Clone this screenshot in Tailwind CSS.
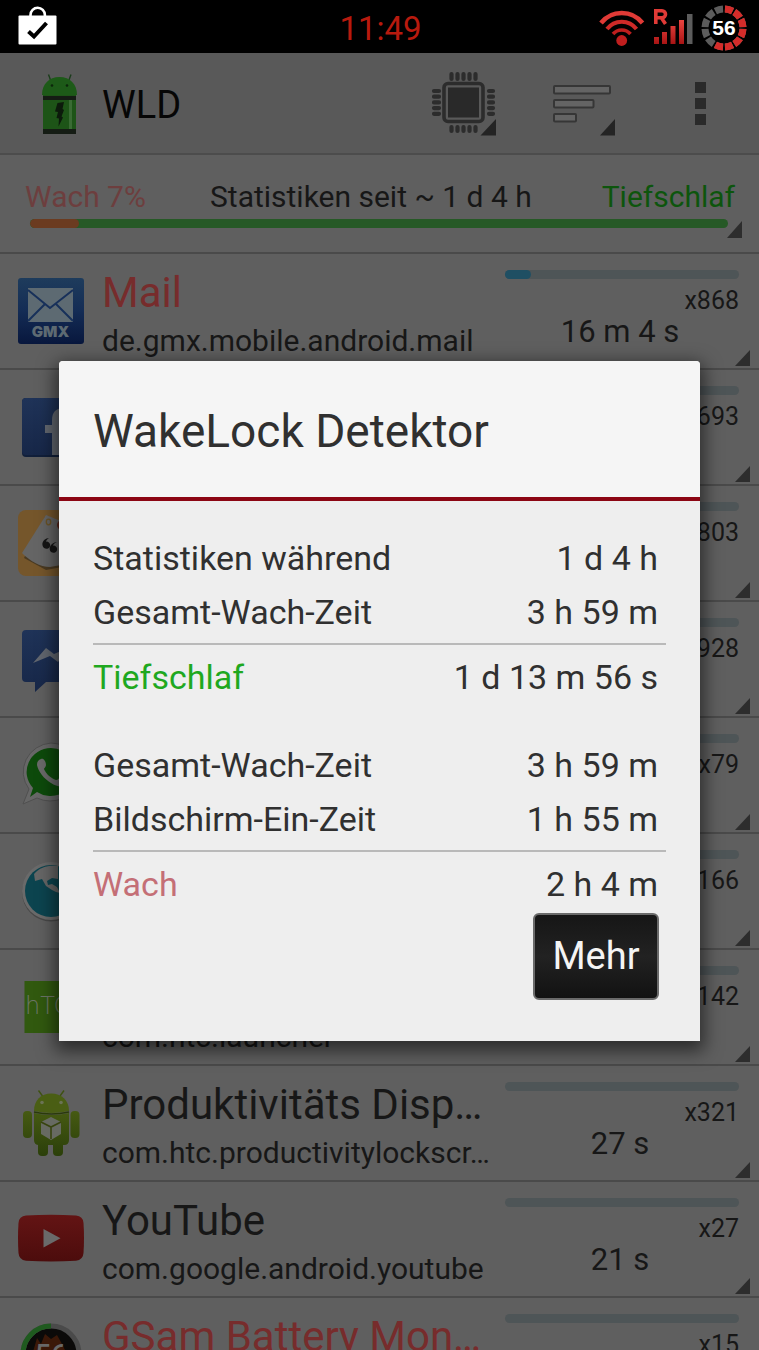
<!DOCTYPE html>
<html lang="de">
<head>
<meta charset="utf-8">
<meta name="viewport" content="width=device-width, initial-scale=1">
<title>WakeLock Detektor</title>
<script src="https://cdn.jsdelivr.net/npm/@tailwindcss/browser@4"></script>
</head>
<body class="h-screen overflow-hidden bg-[#5f5f5f] font-[Roboto,sans-serif] text-[#171717]">
<div class="relative flex h-full flex-col overflow-hidden">

<!-- Status bar -->
<div class="grid h-[53px] shrink-0 grid-cols-[1fr_auto_1fr] items-center bg-black pl-[18px] pr-3">
  <svg class="-mt-1 h-10 w-10" viewBox="18 4 40 40" aria-label="Play Store">
    <path d="M30.500 14v-1a7.200 7.200 0 0 1 14.400 0v1" fill="none" stroke="#fff" stroke-width="2.600"/>
    <rect x="18.500" y="13.500" width="38" height="29" rx="1" fill="#fff"/>
    <path d="M28.500 29.500l5.500 5 12.500-13.500" fill="none" stroke="#000" stroke-width="4"/>
  </svg>
  <time class="pr-1 pt-0.5 text-[33px] leading-[53px] text-[#b81a0e]">11:49</time>
  <div class="flex items-center justify-end gap-2">
    <svg class="h-[46px] w-[46px]" viewBox="598 4 46 46" aria-label="WLAN">
      <defs><linearGradient id="red" x1="0" y1="0" x2="0" y2="1"><stop offset="0" stop-color="#ea4540"/><stop offset="1" stop-color="#a81414"/></linearGradient></defs>
      <path fill="none" stroke="#e03a36" stroke-width="4.500" d="M600 22a26.500 26.500 0 0 1 41.500 0"/>
      <path fill="none" stroke="#cf2a28" stroke-width="4" d="M606 28a18.500 18.500 0 0 1 29.500 0"/>
      <path fill="none" stroke="#be1e1e" stroke-width="3.600" d="M612 33a11.500 11.500 0 0 1 17.500 0"/>
      <circle cx="620.700" cy="39.500" r="5.400" fill="#c01e1e"/>
    </svg>
    <svg class="h-[46px] w-10" viewBox="654 4 40 46" aria-label="Mobilfunk, Roaming">
      <path fill="none" stroke="#e03a36" stroke-width="3.600" d="M656.800 23V9.800h6.200a3.300 3.300 0 0 1 0 7h-5M662.500 17l4 6"/>
      <path fill="url(#red)" d="M655 36h5v7h-5zM663 31h5v12h-5zM671.500 25h5v18h-5zM680 19h5v24h-5z"/>
      <path fill="#5c5c5c" d="M688 13h5.500v30H688z"/>
    </svg>
    <svg class="h-[46px] w-[46px]" viewBox="701 4 46 46" aria-label="Akku 56 Prozent">
      <g fill="none" stroke-width="7" transform="rotate(-90 724 27)">
        <circle cx="724" cy="27" r="19" pathLength="120" stroke="#5c5c5c" stroke-dasharray="8 2" stroke-dashoffset="-1"/>
        <circle cx="724" cy="27" r="19" pathLength="120" stroke="#d42c2a" stroke-dasharray="8 2 8 2 8 2 8 2 8 2 8 2 8 52" stroke-dashoffset="-1"/>
      </g>
      <text x="724" y="34" text-anchor="middle" font-family="Liberation Sans, sans-serif" font-weight="700" font-size="21" fill="#fff">56</text>
    </svg>
  </div>
</div>

<!-- Action bar -->
<header class="flex h-[102px] shrink-0 items-center border-b-2 border-[#4c4c4c] bg-[#595959] pl-10">
  <svg class="h-[62px] w-[38px]" viewBox="40 72 38 62" aria-hidden="true">
    <path d="M50.500 80l-2-5.500M69 80l2-5.500" stroke="#1b3d1b" stroke-width="1.400"/>
    <path d="M42 95c0-11 7-18 17.500-18S77 84 77 95z" fill="#1d5a18"/>
    <circle cx="52" cy="85.500" r="1.300" fill="#0c260a"/><circle cx="67" cy="85.500" r="1.300" fill="#0c260a"/>
    <path d="M43 95h33v39H43z" fill="#1d5417"/>
    <path d="M43 96h33v4H43zM43 129h33v5H43z" fill="#151c14"/>
    <path d="M69 100h3v29h-3z" fill="#3a6b34"/>
    <path d="M57.500 103l6.500-1-1.500 7 1.500 1-2.500 6.500 1.500 1-4.500 9 .500-8-2.500-.500 1.500-6-3-.500z" fill="#0c1a0b"/>
  </svg>
  <h1 class="ml-6 flex-1 pt-1 text-[38px] leading-[48px] text-[#060606]">WLD</h1>
  <button type="button" class="mr-14" aria-label="Prozessor-Wakelocks">
    <svg class="h-[66px] w-[66px]" viewBox="432 70 66 66">
      <g stroke="#2c2c2c" stroke-width="4.200" stroke-linecap="round">
        <path d="M452.500 74v5M458.500 74v5M464.500 74v5M470.500 74v5M476.500 74v5M452.500 127v4M458.500 127v4M464.500 127v4M470.500 127v4M476.500 127v4"/>
        <path d="M435 91h5M435 96.700h5M435 102.400h5M435 108.100h5M435 113.800h5M490 91h4M490 96.700h4M490 102.400h4M490 108.100h4M490 113.800h4"/>
      </g>
      <rect x="445" y="83.500" width="39" height="38" rx="4" fill="none" stroke="#2c2c2c" stroke-width="3.600"/>
      <rect x="449" y="87.500" width="31" height="30" fill="#292929"/>
      <path d="M497 119v16.500h-15.500z" fill="#242424"/>
    </svg>
  </button>
  <button type="button" class="mr-[79px]" aria-label="Sortieren">
    <svg class="h-[66px] w-[62px]" viewBox="553 70 62 66">
      <g fill="#646464" stroke="#363636" stroke-width="2"><rect x="554" y="86" width="56" height="7.500" rx="1"/><rect x="554" y="100" width="39.500" height="7.500" rx="1"/><rect x="554" y="114" width="22" height="7.500" rx="1"/></g>
      <path d="M615 119v16.500h-15z" fill="#242424"/>
    </svg>
  </button>
  <button type="button" class="mr-[53px]" aria-label="Weitere Optionen">
    <svg class="h-[66px] w-3" viewBox="694 70 12 66"><path d="M695 82h11v11h-11zM695 98h11v11h-11zM695 114h11v11h-11z" fill="#2a2a2a"/></svg>
  </button>
</header>

<!-- Summary -->
<section class="relative flex h-[99px] shrink-0 flex-col border-b-2 border-[#4a4a4a] pt-6">
  <div class="flex pl-[25px] pr-6 text-[30px] leading-9">
    <span class="w-[185px] text-[#6d3e3e]">Wach 7%</span>
    <span>Statistiken seit ~ 1 d 4 h</span>
    <span class="ml-auto text-[#0d550d]">Tiefschlaf</span>
  </div>
  <div class="ml-[30px] mr-[31px] mt-1 h-[9px] overflow-hidden rounded-full bg-[#265926]"><div class="h-full rounded-full bg-[#6b3b20]" style="width:7%"></div></div>
  <svg class="absolute bottom-[14px] right-[17px] h-[17px] w-[15px]" viewBox="0 0 15 17"><path d="M15 0v17H0z" fill="#2d2d2d"/></svg>
</section>

<!-- Wakelock list -->
<ul class="min-h-0 flex-1 overflow-hidden">
  <li class="relative flex h-[116px] border-b-2 border-[#4a4a4a] pr-5">
    <div class="flex w-[102px] shrink-0 items-center justify-center">
      <svg class="h-[66px] w-[66px]" viewBox="18 278 66 66" aria-hidden="true">
        <defs><linearGradient id="gmx" x1="0" y1="0" x2="0" y2="1"><stop offset="0" stop-color="#1e3c5c"/><stop offset=".5" stop-color="#142c55"/><stop offset="1" stop-color="#08173d"/></linearGradient></defs>
        <rect x="18" y="278" width="66" height="66" rx="3" fill="url(#gmx)"/>
        <path d="M28 288h45v34H28z" fill="#5d6a72"/>
        <path d="M28 290l22 18 23-18M28 321l17-17M73 321l-17-17" fill="none" stroke="#17305a" stroke-width="2"/>
        <text x="50.500" y="336.500" text-anchor="middle" font-family="Inter, sans-serif" font-weight="900" font-size="15" fill="#5d6a72">GMX</text>
      </svg>
    </div>
    <div class="flex min-w-0 flex-1 flex-col justify-end pb-1 whitespace-nowrap">
      <h2 class="text-[42px] leading-[50px] text-[#772c2c]">Mail</h2>
      <p class="text-[30px] leading-[46px]">de.gmx.mobile.android.mail</p>
    </div>
    <div class="flex w-[234px] shrink-0 flex-col pt-4">
      <div class="h-[9px] rounded-full bg-[#4e5557]"><div class="h-full rounded-full bg-[#1f4f63]" style="width:11%"></div></div>
      <span class="mt-[9px] text-right text-[25px] leading-[26px]">x868</span>
      <span class="pr-1 text-center text-[31px] leading-9">16 m 4 s</span>
    </div>
    <svg class="absolute bottom-0.5 right-[9px] h-4 w-[15px]" viewBox="0 0 15 16"><path d="M15 0v16H0z" fill="#2d2d2d"/></svg>
  </li>
  <li class="relative flex h-[116px] border-b-2 border-[#4a4a4a] pr-5">
    <div class="flex w-[102px] shrink-0 items-center justify-center">
      <svg class="h-[66px] w-[66px]" viewBox="18 394 66 66" aria-hidden="true">
        <defs><linearGradient id="fb" x1="0" y1="0" x2="0" y2="1"><stop offset="0" stop-color="#1f3358"/><stop offset="1" stop-color="#172748"/></linearGradient></defs>
        <rect x="22" y="398" width="58" height="59" rx="4" fill="#111f3a"/>
        <rect x="22" y="398" width="58" height="57" rx="4" fill="url(#fb)"/>
        <path d="M52 455v-22h-7v-8h7v-5c0-8 4-12 12-12h6v8h-5c-4 0-5 1-5 5v4h10v8H60v22z" fill="#62676f"/>
      </svg>
    </div>
    <div class="min-w-0 flex-1"></div>
    <div class="flex w-[234px] shrink-0 flex-col pt-4">
      <div class="h-[9px] rounded-full bg-[#4e5557]"></div>
      <span class="mt-[9px] text-right text-[25px] leading-[26px]">x693</span>
    </div>
    <svg class="absolute bottom-0.5 right-[9px] h-4 w-[15px]" viewBox="0 0 15 16"><path d="M15 0v16H0z" fill="#2d2d2d"/></svg>
  </li>
  <li class="relative flex h-[116px] border-b-2 border-[#4a4a4a] pr-5">
    <div class="flex w-[102px] shrink-0 items-center justify-center">
      <svg class="h-[66px] w-[66px]" viewBox="18 510 66 66" aria-hidden="true">
        <rect x="18" y="510" width="66" height="66" rx="8" fill="#75562b"/>
        <path d="M24 558l21-41 33 13v34l-32 6z" fill="#4a3a22"/>
        <path d="M22 553l24-38 32 13v34l-28 5c-10 0-20-6-28-14z" fill="#656565"/>
        <ellipse cx="48.500" cy="522" rx="2.200" ry="2.800" fill="none" stroke="#6b5326" stroke-width="1.300"/>
        <circle cx="62" cy="525" r="5" fill="#5b2418"/>
        <path d="M49 538c-7 1-8 7-5 10 3 2 7 0 6-4-1-2-3-3-4-2 0-1 1-3 3-4zM57 542c-7 1-9 7-6 10 3 2 7 0 6-4-1-2-3-3-4-2 0-1 1-3 4-4z" fill="#151515"/>
      </svg>
    </div>
    <div class="min-w-0 flex-1"></div>
    <div class="flex w-[234px] shrink-0 flex-col pt-4">
      <div class="h-[9px] rounded-full bg-[#4e5557]"></div>
      <span class="mt-[9px] text-right text-[25px] leading-[26px]">x803</span>
    </div>
    <svg class="absolute bottom-0.5 right-[9px] h-4 w-[15px]" viewBox="0 0 15 16"><path d="M15 0v16H0z" fill="#2d2d2d"/></svg>
  </li>
  <li class="relative flex h-[116px] border-b-2 border-[#4a4a4a] pr-5">
    <div class="flex w-[102px] shrink-0 items-center justify-center">
      <svg class="h-[66px] w-[66px]" viewBox="18 626 66 66" aria-hidden="true">
        <path d="M26 630h50a4 4 0 0 1 4 4v44a4 4 0 0 1-4 4H46l-11 10v-10h-9a4 4 0 0 1-4-4v-44a4 4 0 0 1 4-4z" fill="url(#fb)"/>
        <path d="M33 663l13-15 8 6 7-3 10-5-13 16-8-6z" fill="#62676f"/>
      </svg>
    </div>
    <div class="min-w-0 flex-1"></div>
    <div class="flex w-[234px] shrink-0 flex-col pt-4">
      <div class="h-[9px] rounded-full bg-[#4e5557]"></div>
      <span class="mt-[9px] text-right text-[25px] leading-[26px]">x928</span>
    </div>
    <svg class="absolute bottom-0.5 right-[9px] h-4 w-[15px]" viewBox="0 0 15 16"><path d="M15 0v16H0z" fill="#2d2d2d"/></svg>
  </li>
  <li class="relative flex h-[116px] border-b-2 border-[#4a4a4a] pr-5">
    <div class="flex w-[102px] shrink-0 items-center justify-center">
      <svg class="h-[66px] w-[66px]" viewBox="18 742 66 66" aria-hidden="true">
        <path d="M51 743a30 29 0 1 1-14 55l-14 6 6-15a30 29 0 0 1 22-46z" fill="#676767" stroke="#505050"/>
        <path d="M51 748a25 24 0 1 1-14 44l-7 5 3-9a25 24 0 0 1 18-40z" fill="#0d4a0b"/>
        <path d="M41 759c3-1 5 3 5 6 0 2-2 3-2 4 2 5 7 9 12 11 3 0 3-4 6-2l6 5c-3 5-11 4-17 0-7-4-13-12-14-18 0-3 1-5 4-6z" fill="#6a6a6a"/>
      </svg>
    </div>
    <div class="min-w-0 flex-1"></div>
    <div class="flex w-[234px] shrink-0 flex-col pt-4">
      <div class="h-[9px] rounded-full bg-[#4e5557]"></div>
      <span class="mt-[9px] text-right text-[25px] leading-[26px]">x79</span>
    </div>
    <svg class="absolute bottom-0.5 right-[9px] h-4 w-[15px]" viewBox="0 0 15 16"><path d="M15 0v16H0z" fill="#2d2d2d"/></svg>
  </li>
  <li class="relative flex h-[116px] border-b-2 border-[#4a4a4a] pr-5">
    <div class="flex w-[102px] shrink-0 items-center justify-center">
      <svg class="h-[66px] w-[66px]" viewBox="18 858 66 66" aria-hidden="true">
        <circle cx="51" cy="892.500" r="29" fill="#484848"/>
        <circle cx="51" cy="891" r="29" fill="#6a6a6a"/>
        <circle cx="51" cy="891" r="26" fill="#0c444f"/>
        <path d="M34 874c6-7 14-9 24-8v13l-6-1-5 3 1 4 4-1 5 3 3 6-4-1-4-2-6-4-4-7-7 2z" fill="#666"/>
      </svg>
    </div>
    <div class="min-w-0 flex-1"></div>
    <div class="flex w-[234px] shrink-0 flex-col pt-4">
      <div class="h-[9px] rounded-full bg-[#4e5557]"></div>
      <span class="mt-[9px] text-right text-[25px] leading-[26px]">x166</span>
    </div>
    <svg class="absolute bottom-0.5 right-[9px] h-4 w-[15px]" viewBox="0 0 15 16"><path d="M15 0v16H0z" fill="#2d2d2d"/></svg>
  </li>
  <li class="relative flex h-[116px] border-b-2 border-[#4a4a4a] pr-5">
    <div class="flex w-[102px] shrink-0 items-center justify-center">
      <svg class="h-[66px] w-[66px]" viewBox="18 974 66 66" aria-hidden="true">
        <path d="M24.500 981h53v52h-53z" fill="#31590f"/>
        <text x="25" y="1014" font-family="DejaVu Sans, sans-serif" font-weight="200" font-size="24" fill="#6c7566">hTC</text>
      </svg>
    </div>
    <div class="flex min-w-0 flex-1 flex-col justify-end pb-1 whitespace-nowrap">
      <p class="text-[30px] leading-[46px]">com.htc.launcher</p>
    </div>
    <div class="flex w-[234px] shrink-0 flex-col pt-4">
      <div class="h-[9px] rounded-full bg-[#4e5557]"></div>
      <span class="mt-[9px] text-right text-[25px] leading-[26px]">x142</span>
    </div>
    <svg class="absolute bottom-0.5 right-[9px] h-4 w-[15px]" viewBox="0 0 15 16"><path d="M15 0v16H0z" fill="#2d2d2d"/></svg>
  </li>
  <li class="relative flex h-[116px] border-b-2 border-[#4a4a4a] pr-5">
    <div class="flex w-[102px] shrink-0 items-center justify-center">
      <svg class="h-[66px] w-[66px]" viewBox="18 1090 66 66" aria-hidden="true">
        <defs><linearGradient id="droid" gradientUnits="userSpaceOnUse" x1="0" y1="1111" x2="0" y2="1156"><stop offset="0" stop-color="#465a12"/><stop offset="1" stop-color="#2b3f0a"/></linearGradient></defs>
        <path d="M42.500 1096l-4-5.500M60 1096l4-5.500" stroke="#3f5212" stroke-width="1.400"/>
        <path d="M34 1111c0-11 7-17.500 17.200-17.500S69 1100 69 1111q-17 4-35 0z" fill="#4a5e14"/>
        <circle cx="42" cy="1102.500" r="1.800" fill="#6b7355"/><circle cx="61" cy="1102.500" r="1.800" fill="#6b7355"/>
        <g fill="url(#droid)"><rect x="23" y="1111" width="9" height="27" rx="4"/><rect x="70.500" y="1111" width="9" height="27" rx="4"/><rect x="38" y="1138" width="10" height="18" rx="4"/><rect x="53" y="1138" width="10" height="18" rx="4"/><path d="M34 1113q17 4 35 0v27q0 5-5 5H39q-5 0-5-5z"/></g>
        <path d="M34 1112q17 4 35 0" fill="none" stroke="#2a3a0a" stroke-width="1.300"/>
        <path d="M51 1117l10 5v12l-10 6-10-6v-12z" fill="#676a62"/>
        <path d="M41 1122l10 5 10-5M51 1127v12" fill="none" stroke="#38440f" stroke-width="1.600"/>
      </svg>
    </div>
    <div class="flex min-w-0 flex-1 flex-col justify-end pb-1 whitespace-nowrap">
      <h2 class="text-[42px] leading-[50px]">Produktivitäts Disp…</h2>
      <p class="text-[30px] leading-[46px]">com.htc.productivitylockscr…</p>
    </div>
    <div class="flex w-[234px] shrink-0 flex-col pt-4">
      <div class="h-[9px] rounded-full bg-[#4e5557]"></div>
      <span class="mt-[9px] text-right text-[25px] leading-[26px]">x321</span>
      <span class="pr-1 text-center text-[31px] leading-9">27 s</span>
    </div>
    <svg class="absolute bottom-0.5 right-[9px] h-4 w-[15px]" viewBox="0 0 15 16"><path d="M15 0v16H0z" fill="#2d2d2d"/></svg>
  </li>
  <li class="relative flex h-[116px] border-b-2 border-[#4a4a4a] pr-5">
    <div class="flex w-[102px] shrink-0 items-center justify-center">
      <svg class="h-[66px] w-[66px]" viewBox="18 1206 66 66" aria-hidden="true">
        <defs><linearGradient id="yt" x1="0" y1="0" x2="0" y2="1"><stop offset="0" stop-color="#631414"/><stop offset="1" stop-color="#4c0c0c"/></linearGradient></defs>
        <path d="M26 1215.500q25-1.500 50 0 7 .500 7.500 7.500 1 15 0 30-.500 7-7.500 7.800-25 1.500-50 0-7-.800-7.500-7.800-1-15 0-30 .500-7 7.500-7.500z" fill="url(#yt)"/>
        <path d="M43.500 1229l17 9.200-17 9.300z" fill="#6a6a6a"/>
      </svg>
    </div>
    <div class="flex min-w-0 flex-1 flex-col justify-end pb-1 whitespace-nowrap">
      <h2 class="text-[42px] leading-[50px]">YouTube</h2>
      <p class="text-[30px] leading-[46px]">com.google.android.youtube</p>
    </div>
    <div class="flex w-[234px] shrink-0 flex-col pt-4">
      <div class="h-[9px] rounded-full bg-[#4e5557]"></div>
      <span class="mt-[9px] text-right text-[25px] leading-[26px]">x27</span>
      <span class="pr-1 text-center text-[31px] leading-9">21 s</span>
    </div>
    <svg class="absolute bottom-0.5 right-[9px] h-4 w-[15px]" viewBox="0 0 15 16"><path d="M15 0v16H0z" fill="#2d2d2d"/></svg>
  </li>
  <li class="relative flex h-[116px] pr-5">
    <div class="flex w-[102px] shrink-0 items-center justify-center">
      <svg class="h-[66px] w-[66px]" viewBox="18 1323 66 66" aria-hidden="true">
        <circle cx="51" cy="1354" r="28" fill="#0b0a09" stroke="#4a4a4a" stroke-width="5"/>
        <path d="M23 1354a28 28 0 0 1 28-28" fill="none" stroke="#1f5a1f" stroke-width="5"/>
        <path d="M33 1352l4-14 4 6 4-10 6 5 6-4 5 9 4 8z" fill="#3b1808"/>
        <text x="51" y="1364" text-anchor="middle" font-family="Roboto, sans-serif" font-weight="500" font-size="28" fill="#686868">56</text>
      </svg>
    </div>
    <div class="flex min-w-0 flex-1 flex-col pt-[14px] whitespace-nowrap">
      <h2 class="text-[42px] leading-[50px] text-[#772c2c]">GSam Battery Mon…</h2>
    </div>
    <div class="flex w-[234px] shrink-0 flex-col pt-4">
      <div class="h-[9px] rounded-full bg-[#4e5557]"></div>
      <span class="mt-[9px] text-right text-[25px] leading-[26px]">x15</span>
    </div>
  </li>
</ul>

<!-- Dialog -->
<div class="absolute inset-x-0 bottom-0 top-[53px] flex items-center px-[59px] pb-0.5">
  <div role="dialog" aria-labelledby="dialog-title" class="flex-1 rounded-t-sm bg-[#eeeeee] text-[34px] leading-[54px] text-[#303030] shadow-[0_6px_18px_4px_rgba(0,0,0,0.55)]">
    <h2 id="dialog-title" class="rounded-t-sm border-b-4 border-[#8c0614] bg-[#f5f5f5] px-[34px] pb-9 pt-10 text-[46px] leading-[60px]">WakeLock Detektor</h2>
    <div class="px-[34px] pb-[41px] pt-[30px]">
      <dl>
        <div class="flex justify-between pr-2"><dt>Statistiken während</dt><dd>1 d 4 h</dd></div>
        <div class="flex justify-between border-b-2 border-[#b9b9b9] pb-1 pr-2"><dt>Gesamt-Wach-Zeit</dt><dd>3 h 59 m</dd></div>
        <div class="flex justify-between pr-2 pt-[5px]"><dt class="text-[#1fa81f]">Tiefschlaf</dt><dd>1 d 13 m 56 s</dd></div>
      </dl>
      <dl class="mt-[34px]">
        <div class="flex justify-between pr-2"><dt>Gesamt-Wach-Zeit</dt><dd>3 h 59 m</dd></div>
        <div class="flex justify-between border-b-2 border-[#b9b9b9] pb-1 pr-2"><dt>Bildschirm-Ein-Zeit</dt><dd>1 h 55 m</dd></div>
        <div class="flex justify-between pr-2 pt-[5px]"><dt class="text-[#c46f76]">Wach</dt><dd>2 h 4 m</dd></div>
      </dl>
      <div class="mt-0.5 flex justify-end pr-[7px]">
        <button type="button" class="h-[87px] w-[126px] rounded-md border-2 border-[#6a6a6a] bg-linear-to-b from-[#161616] via-[#222222] to-[#121212] text-[38px] text-[#f4f4f4]">Mehr</button>
      </div>
    </div>
  </div>
</div>

</div>
</body>
</html>
